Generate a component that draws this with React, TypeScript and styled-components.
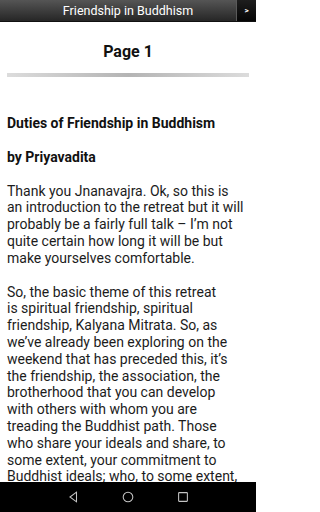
import React from 'react'
import styled, { createGlobalStyle } from 'styled-components'

const GlobalStyle = createGlobalStyle`
	html {
		-webkit-text-size-adjust: none;
		text-size-adjust: none;
	}
	html, body {
		margin: 0;
		padding: 0;
		background: #fff;
	}
	body {
		font-family: Roboto, 'Noto Sans', sans-serif;
	}
	* {
		box-sizing: border-box;
	}
`

// line breaks as the reader app lays them out
const paragraphs = [
	[
		'Thank you Jnanavajra. Ok, so this is',
		'an introduction to the retreat but it will',
		'probably be a fairly full talk \u2013 I\u2019m not',
		'quite certain how long it will be but',
		'make yourselves comfortable.',
	],
	[
		'So, the basic theme of this retreat',
		'is spiritual friendship, spiritual',
		'friendship, Kalyana Mitrata. So, as',
		'we\u2019ve already been exploring on the',
		'weekend that has preceded this, it\u2019s',
		'the friendship, the association, the',
		'brotherhood that you can develop',
		'with others with whom you are',
		'treading the Buddhist path. Those',
		'who share your ideals and share, to',
		'some extent, your commitment to',
		'Buddhist ideals; who, to some extent,',
		'share your way of life.',
	],
]

export default function App() {
	return (
		<>
			<GlobalStyle />
			<Screen>
				<TitleBar>
					<Title>Friendship in Buddhism</Title>
					<NextButton aria-label="Next page">&gt;</NextButton>
				</TitleBar>
				<Content>
					<PageHeading>Page 1</PageHeading>
					<Divider />
					<Article>
						<Heading>Duties of Friendship in Buddhism</Heading>
						<Heading>by Priyavadita</Heading>
						{paragraphs.map((lines, i) => (
							<Paragraph key={i}>
								{lines.map((line, j) => (
									<Line key={j}>{line}</Line>
								))}
							</Paragraph>
						))}
					</Article>
				</Content>
				<NavBar>
					<NavIcon viewBox="0 0 16 16">
						<path d="M12 2.5 L4.5 8 L12 13.5 Z" />
					</NavIcon>
					<NavIcon viewBox="0 0 16 16">
						<circle cx="8" cy="8" r="5.5" />
					</NavIcon>
					<NavIcon viewBox="0 0 16 16">
						<rect x="3" y="3" width="10" height="10" rx="0.6" />
					</NavIcon>
				</NavBar>
			</Screen>
		</>
	)
}

const Screen = styled.div`
	width: 256px;
	height: 512px;
	display: grid;
	grid-template-rows: 22px 1fr 30px;
	overflow: hidden;
	background: #fff;
`

const TitleBar = styled.header`
	display: grid;
	grid-template-columns: 1fr 20px;
	background: linear-gradient(#555, #262626);
	border-bottom: 1px solid #111;
`

const Title = styled.h1`
	margin: 0;
	padding-left: 20px;
	text-align: center;
	color: #fff;
	font-size: 12.5px;
	font-weight: 400;
	line-height: 21px;
	white-space: nowrap;
`

const NextButton = styled.button`
	margin: 0;
	padding: 0 0 1px;
	border: none;
	border-left: 1px solid #5a5a5a;
	background: linear-gradient(#1e1e1e, #050505);
	color: #fff;
	font: bold 8px Roboto, sans-serif;
`

const Content = styled.main`
	min-height: 0;
	overflow: hidden;
	padding: 0 7px;
`

const PageHeading = styled.h2`
	margin: 0;
	padding-top: 20px;
	text-align: center;
	color: #111;
	font-size: 16px;
	font-weight: 700;
	line-height: 19px;
	white-space: nowrap;
`

const Divider = styled.hr`
	height: 4px;
	margin: 12px 0 0;
	border: none;
	background: linear-gradient(to right, #dcdcdc, #b4b4b4 50%, #dcdcdc);
`

const Article = styled.article`
	padding-top: 38px;
	color: #1c1c1c;
	font-size: 14px;
	line-height: 16.8px;
`

const Heading = styled.h3`
	margin: 0 0 17px;
	color: #111;
	font-size: 14px;
	font-weight: 700;
	line-height: 16.8px;
	white-space: nowrap;
`

const Paragraph = styled.p`
	margin: 0 0 17px;
	white-space: nowrap;
`

const Line = styled.span`
	display: block;
`

const NavBar = styled.nav`
	display: flex;
	justify-content: center;
	align-items: center;
	gap: 41px;
	background: #000;
`

const NavIcon = styled.svg`
	width: 14px;
	height: 14px;
	fill: none;
	stroke: #c4c4c4;
	stroke-width: 1.2;
`
